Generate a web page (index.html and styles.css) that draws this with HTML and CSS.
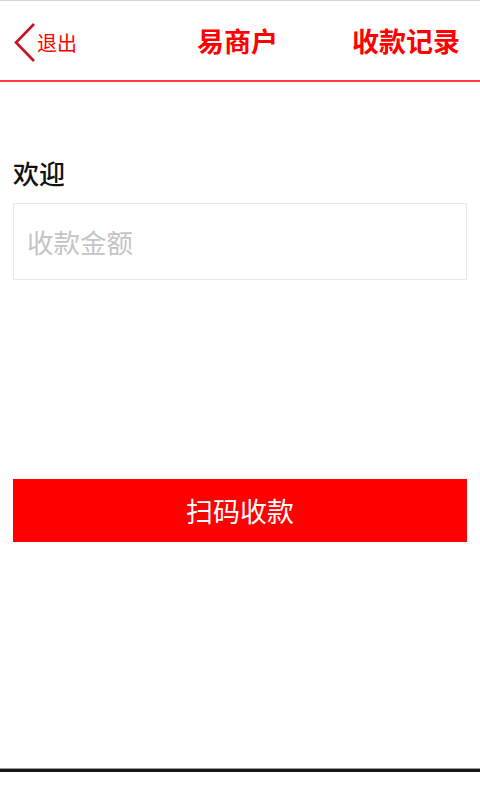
FILE: index.html
```html
<!DOCTYPE html>
<html lang="zh">
<head>
<meta charset="utf-8">
<title>易商户</title>
<link rel="stylesheet" href="styles.css">
</head>
<body>
<div class="page">
  <header class="topbar">
    <a class="back">
      <svg class="chev" width="24" height="42" viewBox="0 0 24 42"><polyline points="21,2 3,20.5 21,39" fill="none" stroke="#c8141e" stroke-width="2.6"/></svg>
      <span class="back-text">退出</span>
    </a>
    <h1 class="title">易商户</h1>
    <a class="records">收款记录</a>
  </header>
  <main class="content">
    <div class="welcome">欢迎</div>
    <div class="amount"><span class="placeholder">收款金额</span></div>
    <button class="scan">扫码收款</button>
  </main>
  <div class="bottom-line"></div>
</div>
</body>
</html>
```
FILE: styles.css
```css
html, body {
  margin: 0;
  padding: 0;
  background: #fff;
}
body {
  font-family: "Noto Sans CJK SC", "Noto Sans", sans-serif;
}
.page {
  height: 800px;
  display: flex;
  flex-direction: column;
  border-top: 1px solid #d4d4e2;
  box-sizing: border-box;
}
.topbar {
  height: 81px;
  border-bottom: 2px solid #ff3c3c;
  display: flex;
  align-items: center;
  justify-content: space-between;
  padding: 0 20px 0 13px;
  box-sizing: border-box;
  flex-shrink: 0;
}
.back {
  display: flex;
  align-items: center;
  width: 120px;
  color: #f00;
  margin-top: 4px;
}
.chev {
  display: block;
}
.back-text {
  font-size: 20px;
  line-height: 24px;
}
.title {
  margin: 0;
  font-size: 27px;
  font-weight: bold;
  color: #f00;
  line-height: 30px;
  margin-left: 2px;
}
.records {
  width: 120px;
  text-align: right;
  font-size: 27px;
  font-weight: bold;
  color: #f00;
  line-height: 30px;
}
.content {
  flex: 1;
  padding: 0 13px;
  display: flex;
  flex-direction: column;
}
.welcome {
  margin-top: 73px;
  font-size: 26px;
  font-weight: 500;
  line-height: 36px;
  color: #111;
}
.amount {
  margin-top: 12px;
  height: 77px;
  border: 1px solid #e8e8e8;
  box-sizing: border-box;
  display: flex;
  align-items: center;
  padding-left: 13px;
}
.placeholder {
  font-size: 26.5px;
  color: #c4c4c4;
}
.scan {
  margin-top: 199px;
  height: 63px;
  border: none;
  background: #f00;
  color: #fff;
  font-family: inherit;
  font-size: 27px;
  padding: 0;
}
.bottom-line {
  height: 3px;
  background: #161616;
  border-top: 1px solid #999;
  margin-bottom: 28px;
  flex-shrink: 0;
}
```
